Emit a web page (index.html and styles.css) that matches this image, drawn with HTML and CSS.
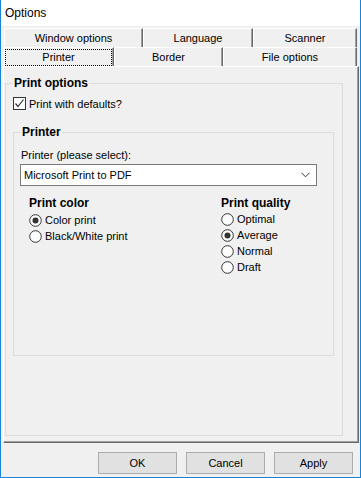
FILE: index.html
```html
<!DOCTYPE html>
<html>
<head>
<meta charset="utf-8">
<link rel="stylesheet" href="styles.css">
</head>
<body>
<div class="window">
  <div class="titlebar">Options</div>
  <div class="tabs">
    <div class="tab-row">
      <div class="tab tab-window">Window options</div>
      <div class="tab tab-language">Language</div>
      <div class="tab tab-scanner">Scanner</div>
    </div>
    <div class="tab-row">
      <div class="tab tab-printer selected"><span class="focus">Printer</span></div>
      <div class="tab tab-border">Border</div>
      <div class="tab tab-file">File options</div>
    </div>
  </div>
  <div class="panel">
    <div class="group group-outer">
      <div class="legend">Print options</div>
      <label class="check-row">
        <span class="checkbox"><svg width="11" height="11" viewBox="0 0 11 11"><polyline points="1.5,5.5 4,8.5 9.5,1.5" fill="none" stroke="#333" stroke-width="1.2"/></svg></span>
        <span>Print with defaults?</span>
      </label>
      <div class="group group-inner">
        <div class="legend">Printer</div>
        <div class="field-label">Printer (please select):</div>
        <div class="combo">
          <span class="combo-text">Microsoft Print to PDF</span>
          <svg class="chevron" width="9" height="6" viewBox="0 0 9 6"><polyline points="0.5,0.8 4.5,4.8 8.5,0.8" fill="none" stroke="#333" stroke-width="1"/></svg>
        </div>
        <div class="columns">
          <div class="col col-color">
            <div class="heading">Print color</div>
            <div class="radio-list radio-list-color">
              <div class="radio-row"><svg class="radio" width="13" height="13" viewBox="0 0 13 13"><circle cx="6.5" cy="6.5" r="5.8" fill="#fff" stroke="#333" stroke-width="1"/><circle cx="6.5" cy="6.5" r="3" fill="#333"/></svg><span>Color print</span></div>
              <div class="radio-row"><svg class="radio" width="13" height="13" viewBox="0 0 13 13"><circle cx="6.5" cy="6.5" r="5.8" fill="#fff" stroke="#333" stroke-width="1"/></svg><span>Black/White print</span></div>
            </div>
          </div>
          <div class="col col-quality">
            <div class="heading">Print quality</div>
            <div class="radio-list radio-list-quality">
              <div class="radio-row"><svg class="radio" width="13" height="13" viewBox="0 0 13 13"><circle cx="6.5" cy="6.5" r="5.8" fill="#fff" stroke="#333" stroke-width="1"/></svg><span>Optimal</span></div>
              <div class="radio-row"><svg class="radio" width="13" height="13" viewBox="0 0 13 13"><circle cx="6.5" cy="6.5" r="5.8" fill="#fff" stroke="#333" stroke-width="1"/><circle cx="6.5" cy="6.5" r="3" fill="#333"/></svg><span>Average</span></div>
              <div class="radio-row"><svg class="radio" width="13" height="13" viewBox="0 0 13 13"><circle cx="6.5" cy="6.5" r="5.8" fill="#fff" stroke="#333" stroke-width="1"/></svg><span>Normal</span></div>
              <div class="radio-row"><svg class="radio" width="13" height="13" viewBox="0 0 13 13"><circle cx="6.5" cy="6.5" r="5.8" fill="#fff" stroke="#333" stroke-width="1"/></svg><span>Draft</span></div>
            </div>
          </div>
        </div>
      </div>
    </div>
  </div>
  <div class="buttons">
    <div class="button">OK</div>
    <div class="button">Cancel</div>
    <div class="button">Apply</div>
  </div>
</div>
</body>
</html>
```
FILE: styles.css
```css
html, body {
  margin: 0;
  padding: 0;
  background: #f0f0f0;
}
body {
  font-family: "Liberation Sans", Arial, sans-serif;
  font-size: 11px;
  color: #000;
}
.window {
  width: 361px;
  height: 478px;
  box-sizing: border-box;
  border: 1px solid #1883d7;
  border-top: none;
  background: #f0f0f0;
  display: flex;
  flex-direction: column;
}
.titlebar {
  height: 26px;
  line-height: 26px;
  background: #fff;
  font-size: 12px;
  padding-left: 4px;
  color: #000;
}
.tabs {
  margin-top: 2px;
  padding-left: 3px;
}
.tab-row {
  display: flex;
  height: 19px;
}
.tab {
  box-sizing: border-box;
  height: 19px;
  border-top: 1px solid #fff;
  border-left: 1px solid #fff;
  border-right: 1px solid #696969;
  box-shadow: inset -1px 0 0 #a0a0a0;
  text-align: center;
  line-height: 18px;
  background: #f0f0f0;
}
.tab-window { width: 139px; }
.tab-language { width: 110px; }
.tab-scanner { width: 104px; }
.tab-printer { width: 110px; }
.tab-border { width: 109px; }
.tab-file { width: 134px; }
.tab.selected {
  padding: 1px 1px 1px 0;
}
.focus {
  display: block;
  box-sizing: border-box;
  height: 17px;
  line-height: 15px;
  border: 1px dotted #000;
}
.panel {
  margin-left: 2px;
  width: 356px;
  height: 377px;
  box-sizing: border-box;
  border-top: 1px solid #fff;
  border-left: 1px solid #fff;
  border-right: 1px solid #696969;
  border-bottom: 1px solid #696969;
  box-shadow: inset -1px -1px 0 #a0a0a0;
  padding: 0 0 0 1px;
}
.group {
  box-sizing: border-box;
  border: 1px solid #dcdcdc;
}
.group-outer {
  margin-top: 16px;
  width: 338px;
  height: 353px;
  padding: 0 7px;
}
.group-inner {
  margin-top: 22px;
  width: 321px;
  height: 224px;
  padding: 0 7px;
}
.legend {
  display: block;
  width: max-content;
  margin-top: -8px;
  padding: 0 1px;
  height: 15px;
  line-height: 15px;
  font-weight: bold;
  font-size: 12px;
  background: #f0f0f0;
}
.check-row {
  display: flex;
  align-items: center;
  height: 13px;
  margin-top: 6px;
  gap: 3px;
}
.checkbox {
  box-sizing: border-box;
  width: 13px;
  height: 13px;
  border: 1px solid #333;
  background: #fff;
  display: flex;
  align-items: center;
  justify-content: center;
}
.field-label {
  margin-top: 8px;
  height: 14px;
  line-height: 14px;
}
.combo {
  margin-top: 2px;
  margin-left: -1px;
  width: 297px;
  height: 22px;
  box-sizing: border-box;
  border: 1px solid #7a7a7a;
  background: #fff;
  display: flex;
  align-items: center;
  justify-content: space-between;
  padding: 0 6px 0 3px;
}
.chevron {
  display: block;
}
.columns {
  display: flex;
  margin-top: 10px;
  margin-left: 8px;
}
.col-color {
  width: 192px;
}
.heading {
  font-weight: bold;
  font-size: 12px;
  height: 14px;
  line-height: 14px;
}
.radio-list-color { margin-top: 2px; }
.radio-list-quality { margin-top: 1px; }
.radio-row {
  display: flex;
  align-items: center;
  height: 16px;
  gap: 3px;
}
.radio {
  display: block;
}
.buttons {
  display: flex;
  justify-content: flex-end;
  gap: 9px;
  margin-top: 9px;
  padding-right: 7px;
}
.button {
  width: 79px;
  height: 22px;
  box-sizing: border-box;
  border: 1px solid #adadad;
  background: #e1e1e1;
  text-align: center;
  line-height: 20px;
}
```
